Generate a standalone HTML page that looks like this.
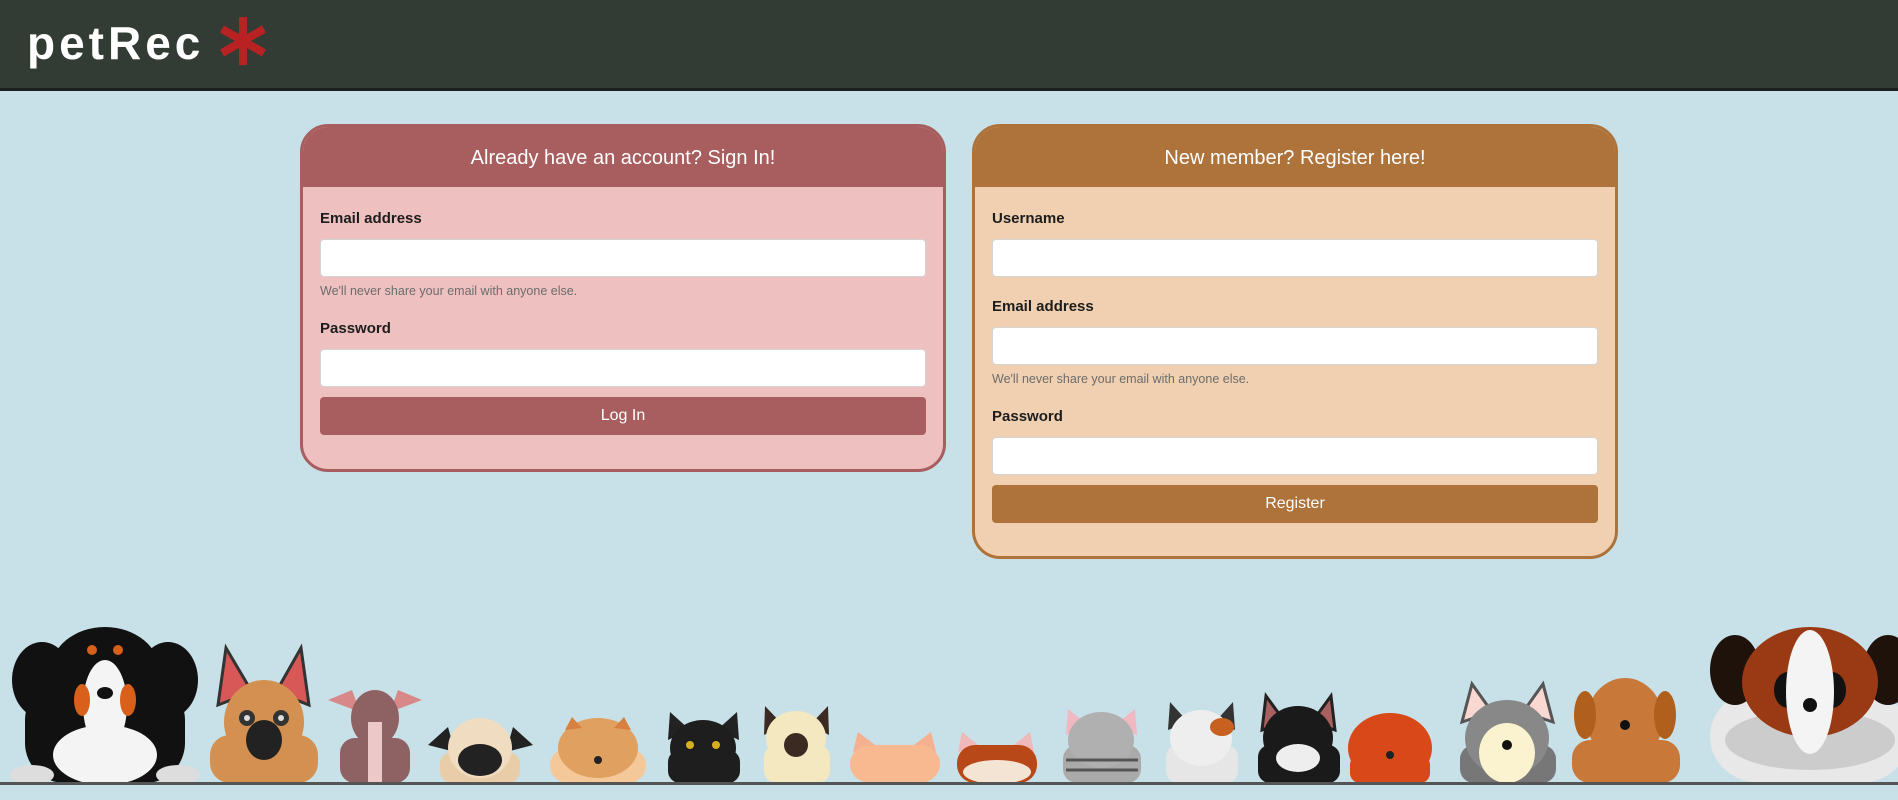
<!DOCTYPE html>
<html><head><meta charset="utf-8"><style>
*{box-sizing:border-box;margin:0;padding:0}
body{width:1898px;height:800px;background:#c8e0e8;font-family:"Liberation Sans",sans-serif;position:relative;overflow:hidden}
.hdr{position:absolute;left:0;top:0;width:1898px;height:91px;background:#333b35;border-bottom:3px solid #1c1f1e}
.logo{position:absolute;left:27px;top:16px;font-size:46px;font-weight:bold;color:#fff;letter-spacing:4px}
.card{position:absolute;top:124px;border:3px solid;border-radius:28px;overflow:hidden}
.card .h{height:60px;color:#fff;font-size:20px;text-align:center;line-height:62px}
.card .b{padding:23px 17px 0 17px}
label{display:block;font-weight:bold;font-size:15px;color:#1d1d1d;margin-bottom:11px;line-height:18px}
.in{height:38px;background:#fff;border:1px solid #d4d4d4;border-radius:4px}
.help{font-size:12.5px;color:#6c6c6c;margin:7px 0 21px;line-height:15px}
.btn{height:38px;border-radius:4px;color:#fff;text-align:center;line-height:38px;font-size:16px;margin-top:10px}
</style></head><body>
<div class="hdr"><div class="logo">petRec</div>
<svg style="position:absolute;left:218px;top:16px" width="50" height="50" viewBox="-25 -25 50 50">
<g stroke="#b82222" stroke-width="8" stroke-linecap="butt"><line x1="0" y1="-24" x2="0" y2="24"/><line x1="-21" y1="-12" x2="21" y2="12"/><line x1="-21" y1="12" x2="21" y2="-12"/></g></svg>
</div>

<div class="card" style="left:300px;width:646px;height:348px;border-color:#a85e5e;background:#efc0c0">
<div class="h" style="background:#a85e5e">Already have an account? Sign In!</div>
<div class="b">
<label>Email address</label><div class="in"></div>
<div class="help">We'll never share your email with anyone else.</div>
<label>Password</label><div class="in"></div>
<div class="btn" style="background:#a85e5e">Log In</div>
</div></div>

<div class="card" style="left:972px;width:646px;height:435px;border-color:#ad733a;background:#f0d0b0">
<div class="h" style="background:#ad733a">New member? Register here!</div>
<div class="b">
<label>Username</label><div class="in" style="margin-bottom:21px"></div>
<label>Email address</label><div class="in"></div>
<div class="help">We'll never share your email with anyone else.</div>
<label>Password</label><div class="in"></div>
<div class="btn" style="background:#ad733a">Register</div>
</div></div>

<svg style="position:absolute;left:0;top:600px" width="1898" height="200" viewBox="0 600 1898 200">
<!-- 1 bernese -->
<ellipse cx="42" cy="680" rx="30" ry="38" fill="#111"/><ellipse cx="168" cy="680" rx="30" ry="38" fill="#111"/>
<rect x="25" y="680" width="160" height="103" rx="40" fill="#111"/>
<ellipse cx="105" cy="672" rx="55" ry="45" fill="#111"/>
<ellipse cx="105" cy="705" rx="22" ry="45" fill="#f4f4f4"/>
<ellipse cx="105" cy="755" rx="52" ry="30" fill="#f4f4f4"/>
<ellipse cx="82" cy="700" rx="8" ry="16" fill="#d8601a"/><ellipse cx="128" cy="700" rx="8" ry="16" fill="#d8601a"/>
<ellipse cx="32" cy="775" rx="22" ry="10" fill="#ddd"/><ellipse cx="178" cy="775" rx="22" ry="10" fill="#ddd"/>
<circle cx="92" cy="650" r="5" fill="#d8601a"/><circle cx="118" cy="650" r="5" fill="#d8601a"/>
<ellipse cx="105" cy="693" rx="8" ry="6" fill="#111"/>
<!-- 2 shepherd -->
<path d="M218 705 L226 648 L252 692Z M309 705 L301 648 L276 692Z" fill="#d85858" stroke="#333" stroke-width="3"/>
<rect x="210" y="735" width="108" height="48" rx="20" fill="#d49050"/>
<ellipse cx="264" cy="722" rx="40" ry="42" fill="#d49050"/>
<ellipse cx="264" cy="740" rx="18" ry="20" fill="#222"/>
<circle cx="247" cy="718" r="8" fill="#333"/><circle cx="281" cy="718" r="8" fill="#333"/>
<circle cx="247" cy="718" r="3" fill="#ddd"/><circle cx="281" cy="718" r="3" fill="#ddd"/>
<!-- 3 greyhound -->
<path d="M328 700 L352 690 L360 712Z M422 700 L398 690 L390 712Z" fill="#d88888"/>
<rect x="340" y="738" width="70" height="45" rx="15" fill="#8e6262"/>
<ellipse cx="375" cy="718" rx="24" ry="28" fill="#8e6262"/>
<rect x="368" y="722" width="14" height="61" fill="#ecc8c8"/>
<!-- 4 pug -->
<path d="M428 745 L448 727 L455 752Z M533 745 L513 727 L506 752Z" fill="#222"/>
<rect x="440" y="752" width="80" height="31" rx="12" fill="#e8cda8"/>
<ellipse cx="480" cy="748" rx="32" ry="30" fill="#f0dcc0"/>
<ellipse cx="480" cy="760" rx="22" ry="16" fill="#222"/>
<!-- 5 pomeranian -->
<rect x="550" y="748" width="96" height="35" rx="18" fill="#f4c898"/>
<ellipse cx="598" cy="748" rx="40" ry="30" fill="#e0a060"/>
<path d="M565 730 L572 717 L582 728Z M631 730 L624 717 L614 728Z" fill="#d88040"/>
<circle cx="598" cy="760" r="4" fill="#222"/>
<!-- 6 black cat -->
<path d="M668 740 L670 712 L690 730Z M739 740 L737 712 L717 730Z" fill="#222"/>
<rect x="668" y="750" width="72" height="33" rx="12" fill="#1e1e1e"/>
<ellipse cx="703" cy="748" rx="33" ry="28" fill="#1e1e1e"/>
<circle cx="690" cy="745" r="4" fill="#d8b020"/><circle cx="716" cy="745" r="4" fill="#d8b020"/>
<!-- 7 siamese -->
<path d="M764 735 L765 706 L783 725Z M829 735 L828 706 L810 725Z" fill="#3a2a22"/>
<rect x="764" y="745" width="66" height="38" rx="12" fill="#f4e8c0"/>
<ellipse cx="796" cy="738" rx="30" ry="27" fill="#f4e8c0"/>
<ellipse cx="796" cy="745" rx="12" ry="12" fill="#3a2a22"/>
<!-- 8 orange cat -->
<path d="M853 752 L858 732 L875 745Z M936 752 L931 732 L914 745Z" fill="#f4b090"/>
<rect x="850" y="745" width="90" height="38" rx="20" fill="#f8b890"/>
<!-- 9 red cat -->
<path d="M958 752 L962 732 L978 745Z M1034 752 L1030 732 L1014 745Z" fill="#f0b8b8"/>
<rect x="957" y="745" width="80" height="38" rx="18" fill="#b84818"/>
<ellipse cx="997" cy="772" rx="34" ry="12" fill="#f4e4d4"/>
<!-- 10 tabby -->
<path d="M1066 735 L1068 709 L1088 725Z M1137 735 L1135 709 L1115 725Z" fill="#f0b8c0"/>
<rect x="1063" y="745" width="78" height="38" rx="14" fill="#aaaaaa"/>
<ellipse cx="1101" cy="740" rx="33" ry="28" fill="#b0b0b0"/>
<path d="M1066 760 h72 M1066 770 h72" stroke="#555" stroke-width="3"/>
<!-- 11 calico -->
<path d="M1168 730 L1170 702 L1188 722Z M1235 730 L1233 702 L1215 722Z" fill="#333"/>
<rect x="1166" y="745" width="72" height="38" rx="12" fill="#e6e6e6"/>
<ellipse cx="1201" cy="738" rx="31" ry="28" fill="#eee"/>
<ellipse cx="1222" cy="727" rx="12" ry="9" fill="#c86020"/>
<!-- 12 boston -->
<path d="M1262 730 L1266 696 L1285 722Z M1335 730 L1331 696 L1312 722Z" fill="#a86060" stroke="#222" stroke-width="3"/>
<rect x="1258" y="745" width="82" height="38" rx="12" fill="#1a1a1a"/>
<ellipse cx="1298" cy="738" rx="35" ry="32" fill="#1a1a1a"/>
<ellipse cx="1298" cy="758" rx="22" ry="14" fill="#eee"/>
<!-- 13 poodle -->
<ellipse cx="1390" cy="748" rx="42" ry="35" fill="#d84818"/>
<rect x="1350" y="755" width="80" height="28" rx="10" fill="#d84818"/>
<circle cx="1390" cy="755" r="4" fill="#222"/>
<!-- 14 husky -->
<path d="M1462 722 L1472 684 L1492 712Z M1553 722 L1543 684 L1523 712Z" fill="#f8d8d0" stroke="#555" stroke-width="3"/>
<rect x="1460" y="745" width="96" height="38" rx="14" fill="#777"/>
<ellipse cx="1507" cy="738" rx="42" ry="38" fill="#888"/>
<ellipse cx="1507" cy="753" rx="28" ry="30" fill="#fbf2d0"/>
<circle cx="1507" cy="745" r="5" fill="#111"/>
<!-- 15 golden -->
<rect x="1572" y="740" width="108" height="43" rx="18" fill="#c87838"/>
<ellipse cx="1625" cy="720" rx="38" ry="42" fill="#c87838"/>
<ellipse cx="1585" cy="715" rx="11" ry="24" fill="#b0601c"/>
<ellipse cx="1665" cy="715" rx="11" ry="24" fill="#b0601c"/>
<circle cx="1625" cy="725" r="5" fill="#111"/>
<!-- 16 st bernard -->
<rect x="1710" y="690" width="200" height="93" rx="50" fill="#e8e8e8"/>
<ellipse cx="1810" cy="740" rx="85" ry="30" fill="#cccccc"/>
<ellipse cx="1735" cy="670" rx="25" ry="35" fill="#1e120a"/>
<ellipse cx="1888" cy="670" rx="25" ry="35" fill="#1e120a"/>
<ellipse cx="1810" cy="682" rx="68" ry="55" fill="#9a3a14"/>
<ellipse cx="1788" cy="690" rx="14" ry="18" fill="#111"/><ellipse cx="1832" cy="690" rx="14" ry="18" fill="#111"/>
<ellipse cx="1810" cy="692" rx="24" ry="62" fill="#f4f4f4"/>
<circle cx="1810" cy="705" r="7" fill="#111"/>
<rect x="0" y="782" width="1898" height="3" fill="#555"/>
</svg>
</body></html>
